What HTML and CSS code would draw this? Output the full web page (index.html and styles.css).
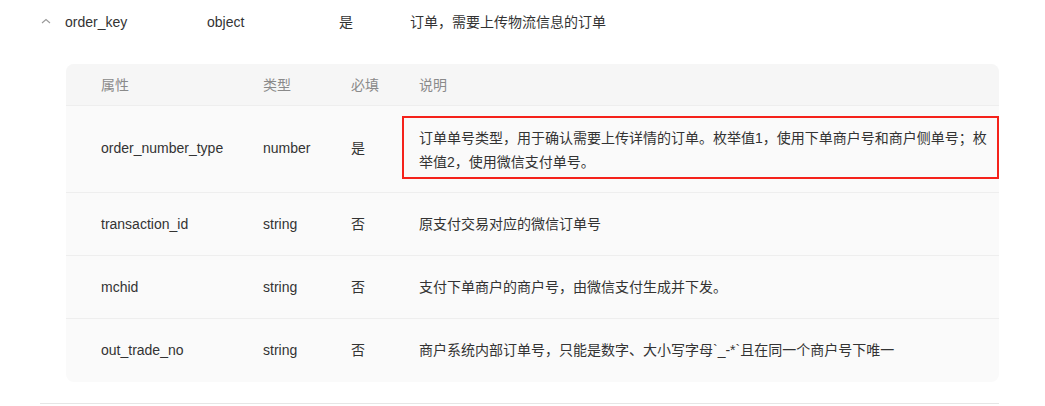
FILE: index.html
```html
<!DOCTYPE html>
<html lang="zh-CN">
<head>
<meta charset="utf-8">
<title>order_key</title>
<link rel="stylesheet" href="styles.css">
</head>
<body>
<div class="section">
  <div class="param-row">
    <span class="toggle">
      <svg width="10" height="6" viewBox="0 0 10 6"><polyline points="1,5 5,1.5 9,5" fill="none" stroke="#9a9a9a" stroke-width="1.1"/></svg>
    </span>
    <span class="p-name">order_key</span>
    <span class="p-type">object</span>
    <span class="p-req">是</span>
    <span class="p-desc">订单，需要上传物流信息的订单</span>
  </div>
  <div class="detail">
    <div class="card">
      <div class="grid head">
        <div class="c-name">属性</div>
        <div class="c-type">类型</div>
        <div class="c-req">必填</div>
        <div class="c-desc">说明</div>
      </div>
      <div class="grid body first">
        <div class="c-name">order_number_type</div>
        <div class="c-type">number</div>
        <div class="c-req">是</div>
        <div class="c-desc highlight">订单单号类型，用于确认需要上传详情的订单。枚举值1，使用下单商户号和商户侧单号；枚举值2，使用微信支付单号。</div>
      </div>
      <div class="grid body">
        <div class="c-name">transaction_id</div>
        <div class="c-type">string</div>
        <div class="c-req">否</div>
        <div class="c-desc">原支付交易对应的微信订单号</div>
      </div>
      <div class="grid body">
        <div class="c-name">mchid</div>
        <div class="c-type">string</div>
        <div class="c-req">否</div>
        <div class="c-desc">支付下单商户的商户号，由微信支付生成并下发。</div>
      </div>
      <div class="grid body last">
        <div class="c-name">out_trade_no</div>
        <div class="c-type">string</div>
        <div class="c-req">否</div>
        <div class="c-desc">商户系统内部订单号，只能是数字、大小写字母`_-*`且在同一个商户号下唯一</div>
      </div>
    </div>
  </div>
</div>
</body>
</html>
```

FILE: styles.css
```css
html, body {
  margin: 0;
  padding: 0;
  background: #ffffff;
}

body {
  font-family: "Liberation Sans", "Noto Sans CJK SC", sans-serif;
  font-size: 14px;
  color: #333333;
}

.section {
  margin-left: 40px;
  width: 959px;
}

.param-row {
  display: flex;
  align-items: center;
  height: 42px;
  padding-top: 1px;
  box-sizing: border-box;
  line-height: 24px;
}

.toggle {
  width: 25px;
  display: flex;
  align-items: center;
  padding-left: 1px;
  box-sizing: border-box;
  margin-top: -2px;
}

.p-name { width: 142px; }
.p-type { width: 132px; }
.p-req { width: 71px; }
.p-desc { flex: 1; }

.detail {
  padding: 22px 0 21px 26px;
  border-bottom: 1px solid #e6e6e6;
}

.card {
  background: #fafafa;
  border-radius: 8px;
  overflow: hidden;
}

.grid {
  display: grid;
  grid-template-columns: 197px 88px 51px 1fr;
  align-items: center;
  line-height: 24px;
}

.grid .c-name {
  padding-left: 35px;
}

.head {
  background: #f6f6f6;
  color: #8a8a8a;
  height: 42px;
  box-sizing: border-box;
  border-bottom: 1px solid #eeeeee;
}

.head .c-desc {
  padding-left: 17px;
}

.body {
  padding: 19px 0;
  border-bottom: 1px solid #eeeeee;
}

.body .c-desc {
  padding-left: 17px;
}

.body.first {
  padding: 10px 0 13px;
}

.body.last {
  border-bottom: none;
  padding: 19px 0 20px;
}

.body .c-desc.highlight {
  border: 2px solid #f5221b;
  padding: 8px 4px 3px 15px;
}
```
